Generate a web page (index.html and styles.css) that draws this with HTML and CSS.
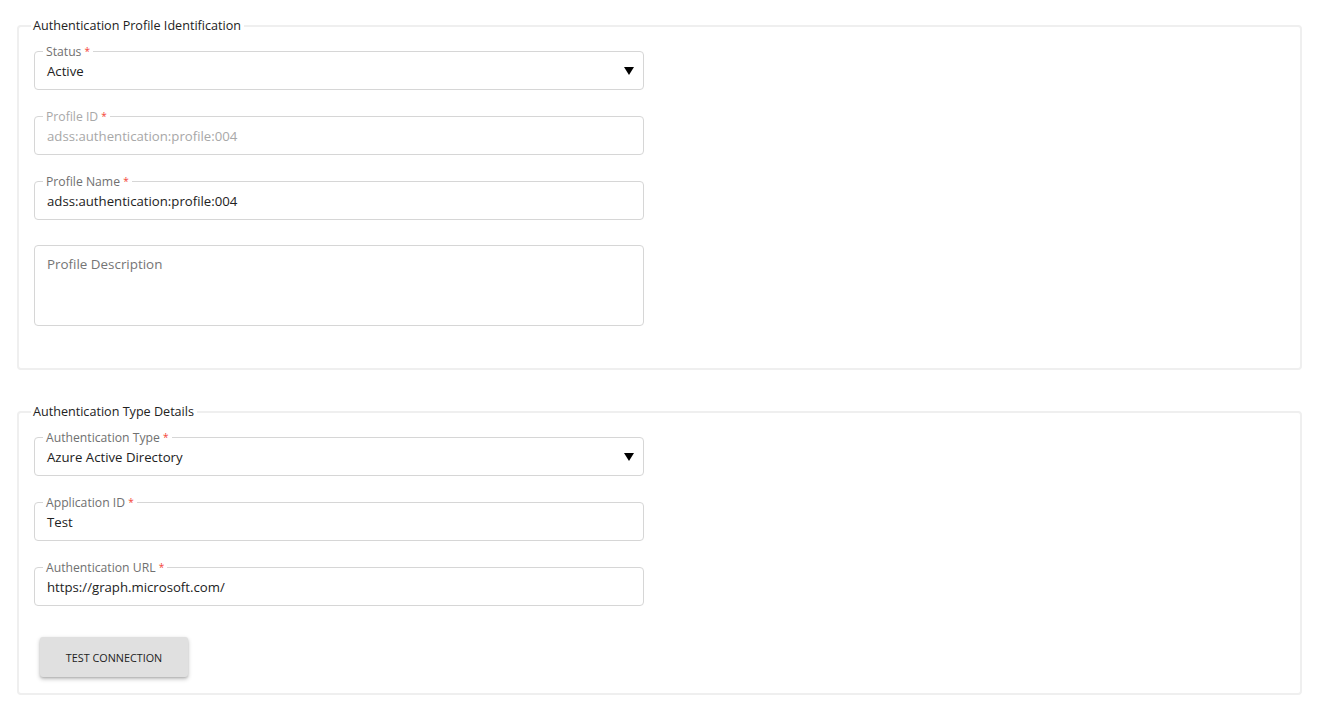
FILE: index.html
```html
<!DOCTYPE html>
<html lang="en">
<head>
<meta charset="utf-8">
<title>Authentication Profile</title>
<link rel="stylesheet" href="styles.css">
</head>
<body>
<div class="page">
  <fieldset class="group">
    <legend class="group-title">Authentication Profile Identification</legend>
    <fieldset class="field">
      <legend class="field-label">Status <span class="req">*</span></legend>
      <div class="field-value select">
        <span>Active</span>
        <svg class="arrow" width="10" height="8" viewBox="0 0 10 8"><polygon points="0,0 10,0 5,8" fill="#000"/></svg>
      </div>
    </fieldset>
    <fieldset class="field disabled">
      <legend class="field-label">Profile ID <span class="req">*</span></legend>
      <div class="field-value">adss:authentication:profile:004</div>
    </fieldset>
    <fieldset class="field">
      <legend class="field-label">Profile Name <span class="req">*</span></legend>
      <div class="field-value">adss:authentication:profile:004</div>
    </fieldset>
    <div class="textarea">Profile Description</div>
  </fieldset>

  <fieldset class="group second">
    <legend class="group-title">Authentication Type Details</legend>
    <fieldset class="field">
      <legend class="field-label">Authentication Type <span class="req">*</span></legend>
      <div class="field-value select">
        <span>Azure Active Directory</span>
        <svg class="arrow" width="10" height="8" viewBox="0 0 10 8"><polygon points="0,0 10,0 5,8" fill="#000"/></svg>
      </div>
    </fieldset>
    <fieldset class="field">
      <legend class="field-label">Application ID <span class="req">*</span></legend>
      <div class="field-value">Test</div>
    </fieldset>
    <fieldset class="field">
      <legend class="field-label">Authentication URL <span class="req">*</span></legend>
      <div class="field-value">https://graph.microsoft.com/</div>
    </fieldset>
    <button class="btn">TEST CONNECTION</button>
  </fieldset>
</div>
</body>
</html>
```

FILE: styles.css
```css
* { box-sizing: border-box; }
html, body {
  margin: 0;
  background: #fff;
  font-family: "Open Sans", "Noto Sans", sans-serif;
  color: #222;
}
.page {
  padding: 17px 16px 0 17px;
}
.group {
  margin: 0;
  border: 2px solid #efefef;
  border-radius: 4px;
  padding: 10px 15px 42px 15px;
  min-width: 0;
}
.group.second {
  margin-top: 33px;
  padding-bottom: 16px;
}
.group-title {
  font-size: 12.6px;
  line-height: 17px;
  padding: 0 3px 0 2px;
  margin-left: -3px;
  color: #222;
}
.field {
  width: 610px;
  margin: 0 0 19px 0;
  border: 1px solid #d6d6d6;
  border-radius: 4px;
  padding: 0 12px 0 8px;
  min-width: 0;
}
.field-label {
  font-size: 12.2px;
  line-height: 14px;
  height: 14px;
  padding: 0 3px;
  color: #707070;
}
.req {
  color: #f44336;
  font-size: 10px;
  vertical-align: 1px;
}
.field-value {
  font-size: 13.2px;
  line-height: 20px;
  padding: 3px 0 8px 4px;
  color: #222;
}
.disabled .field-label,
.disabled .field-value {
  color: #a8a8a8;
}
.select {
  display: flex;
  justify-content: space-between;
  align-items: center;
}
.arrow {
  margin-right: -3px;
}
.textarea {
  width: 610px;
  height: 81px;
  margin-top: 25px;
  border: 1px solid #d6d6d6;
  border-radius: 4px;
  padding: 8px 12px;
  font-size: 13.4px;
  line-height: 20px;
  color: #757575;
}
.btn {
  display: block;
  margin: 31px 0 0 6px;
  width: 148px;
  height: 40px;
  border: none;
  border-radius: 3px;
  background: #e0e0e0;
  box-shadow: 0 2px 4px rgba(0,0,0,0.25), 0 1px 2px rgba(0,0,0,0.12);
  font-family: "Open Sans", "Noto Sans", sans-serif;
  font-size: 10.8px;
  color: #222;
  letter-spacing: 0;
  padding: 0;
}
```
